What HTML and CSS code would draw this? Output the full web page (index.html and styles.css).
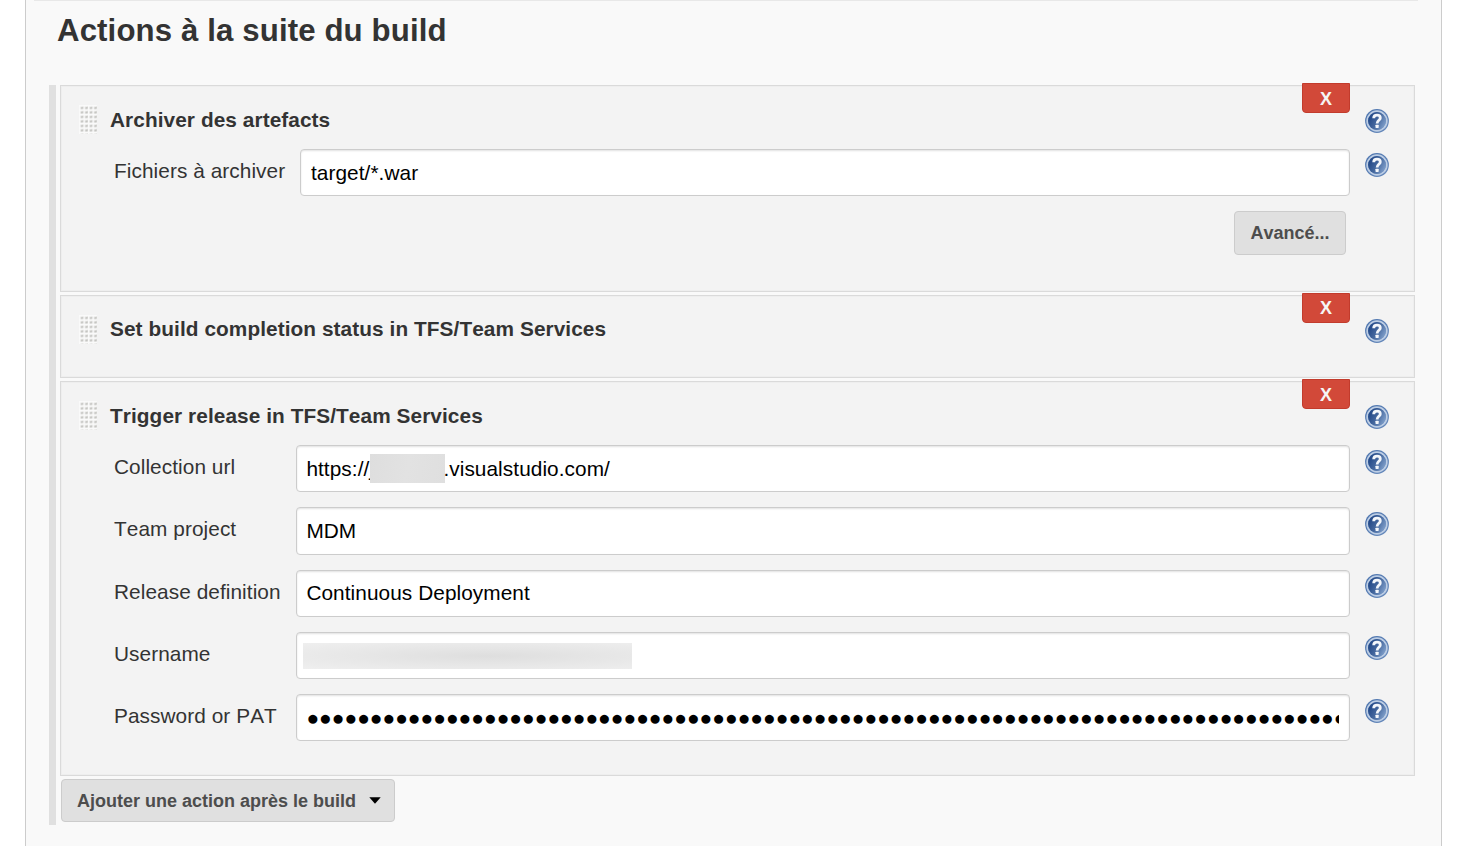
FILE: index.html
```html
<!DOCTYPE html>
<html lang="fr">
<head>
<meta charset="utf-8">
<title>Actions à la suite du build</title>
<link rel="stylesheet" href="styles.css">
</head>
<body>
<svg width="0" height="0" class="defs" aria-hidden="true">
  <defs>
    <linearGradient id="blue" x1="0" y1="0.3" x2="1" y2="0.8">
      <stop offset="0" stop-color="#1f4585"/><stop offset="0.5" stop-color="#46699f"/><stop offset="1" stop-color="#86a5cf"/>
    </linearGradient>
    <linearGradient id="rim" x1="0" y1="0" x2="1" y2="1">
      <stop offset="0" stop-color="#4a72ac"/><stop offset="1" stop-color="#6a8cbd"/>
    </linearGradient>
    <symbol id="help" viewBox="0 0 24 24">
      <circle cx="12" cy="12" r="11.9" fill="url(#rim)"/>
      <circle cx="12" cy="12" r="9.8" fill="none" stroke="#bccde4" stroke-width="1.8"/>
      <circle cx="12" cy="12" r="8.9" fill="url(#blue)"/>
      <path d="M8.7 9.2C8.7 7 10.2 6.2 12 6.2C14.2 6.2 15.3 7.3 15.3 8.9C15.3 11.2 12.1 11.4 12.1 14.4" fill="none" stroke="#f4f7fb" stroke-width="2.8"/>
      <rect x="10.5" y="15.7" width="3.2" height="3.2" rx="0.6" fill="#f4f7fb"/>
    </symbol>
    <pattern id="dots" width="4.5" height="4.5" patternUnits="userSpaceOnUse">
      <rect width="4.5" height="4.5" fill="#fafafa"/>
      <path d="M1.6 3.6L4 1.3V3.8H1.6Z" fill="#b4b4b0"/>
      <rect x="1.5" y="1.6" width="2.8" height="2.4" fill="#cacac7" opacity="0.7"/>
    </pattern>
    <symbol id="grip" viewBox="0 0 18 29"><rect width="18" height="29" fill="url(#dots)"/></symbol>
  </defs>
</svg>
<main class="panel">
  <div class="rule"></div>
  <h1 class="heading">Actions à la suite du build</h1>
  <section class="steps">
    <article class="step step-archive">
      <button class="delete">X</button>
      <header class="step-head"><svg class="grip"><use href="#grip"/></svg><h2 class="title">Archiver des artefacts</h2><svg class="help"><use href="#help"/></svg></header>
      <div class="fields">
        <div class="row row-wide"><label class="label">Fichiers à archiver</label><div class="input"><span>target/*.war</span></div><svg class="help"><use href="#help"/></svg></div>
      </div>
      <div class="advanced"><button class="button">Avancé...</button></div>
    </article>
    <article class="step step-status">
      <button class="delete">X</button>
      <header class="step-head"><svg class="grip"><use href="#grip"/></svg><h2 class="title">Set build completion status in TFS/Team Services</h2><svg class="help"><use href="#help"/></svg></header>
    </article>
    <article class="step step-release">
      <button class="delete">X</button>
      <header class="step-head"><svg class="grip"><use href="#grip"/></svg><h2 class="title">Trigger release in TFS/Team Services</h2><svg class="help"><use href="#help"/></svg></header>
      <div class="fields">
        <div class="row"><label class="label">Collection url</label><div class="input"><span>https://j</span><span class="mask-host"></span><span>.visualstudio.com/</span></div><svg class="help"><use href="#help"/></svg></div>
        <div class="row"><label class="label">Team project</label><div class="input"><span>MDM</span></div><svg class="help"><use href="#help"/></svg></div>
        <div class="row"><label class="label">Release definition</label><div class="input"><span>Continuous Deployment</span></div><svg class="help"><use href="#help"/></svg></div>
        <div class="row"><label class="label">Username</label><div class="input"><span class="mask-user"></span></div><svg class="help"><use href="#help"/></svg></div>
        <div class="row"><label class="label">Password or PAT</label><div class="input"><span class="secret">●●●●●●●●●●●●●●●●●●●●●●●●●●●●●●●●●●●●●●●●●●●●●●●●●●●●●●●●●●●●●●●●●●●●●●●●●●●●●●●●●●</span></div><svg class="help"><use href="#help"/></svg></div>
      </div>
    </article>
    <button class="button add">Ajouter une action après le build<svg class="caret" viewBox="0 0 12 7"><path d="M0.3 0.3H11.7L6 6.7Z"/></svg></button>
  </section>
</main>
</body>
</html>
```
FILE: styles.css
```css
* { box-sizing: border-box; }
body {
  margin: 0;
  height: 846px;
  overflow: hidden;
  background: #fff;
  color: #333;
  font: 20.8px/24px "Liberation Sans", Arial, sans-serif;
  font-kerning: none;
  letter-spacing: 0.07px;
}
.defs { position: absolute; }
.panel {
  width: 1417px;
  height: 846px;
  margin-left: 25px;
  padding: 0 23px;
  background: #f9f9f9;
  border: 1px solid #ccc;
  border-width: 0 1px;
}
.rule { height: 1px; margin: 0 0 0 -15px; background: #e8e8e8; }
.heading {
  margin: 12px 0 0 8px;
  height: 72px;
  font-size: 31.2px;
  line-height: 36px;
  letter-spacing: 0.12px;
  white-space: nowrap;
}
.steps {
  display: flex;
  flex-direction: column;
  align-items: flex-start;
  gap: 3px;
  width: 1366px;
  height: 740px;
  padding-left: 4px;
  border-left: 7px solid #e0e0e0;
}
.step {
  position: relative;
  flex: none;
  width: 1355px;
  background: #f3f3f3;
  border: 1px solid #dadada;
  box-shadow: inset 0 0 0 1px #eee;
}
.step-archive { height: 207px; }
.step-status { height: 83px; }
.step-release { height: 395px; }
.step-head {
  display: grid;
  grid-template-columns: 49px 1fr 49px;
  align-items: start;
  padding: 19px 0 0 18px;
  height: 63px;
}
.grip { width: 18px; height: 29px; }
.title { margin: 3px 0 0 -18px; font-size: 20.8px; line-height: 24px; letter-spacing: 0.08px; white-space: nowrap; }
.step-status .title { margin-top: 2px; }
.help { display: block; width: 24px; height: 24px; }
.step-head .help { margin-top: 4px; }
.delete {
  position: absolute;
  top: -3px;
  right: 64px;
  width: 48px;
  height: 30px;
  padding: 2px 0 0;
  background: #d24939;
  border: 1px solid #c23b2c;
  border-radius: 0 0 4px 4px;
  color: #f5f5f5;
  font: bold 18px/24px "Liberation Sans", Arial, sans-serif;
}
.step-status .delete { padding-top: 0; }
.fields { display: grid; gap: 15px; padding-left: 53px; }
.row { display: grid; grid-template-columns: 182px 1054px 24px; align-items: start; }
.row-wide { grid-template-columns: 186px 1050px 24px; }
.row .help { margin: 4.7px 0 0 15px; }
.row-wide .help { margin-top: 4px; }
.label { padding-top: 10px; white-space: nowrap; }
.input {
  display: flex;
  align-items: center;
  height: 47.25px;
  padding: 0.5px 10px 0 9.4px;
  overflow: hidden;
  background: #fff;
  border: 1px solid #ccc;
  border-radius: 4px;
  box-shadow: inset 0 1px 2px rgba(0, 0, 0, 0.12);
  color: #000;
  white-space: nowrap;
}
.row-wide .input { height: 47px; padding-left: 10px; }
.mask-host { width: 75px; height: 29px; margin: -1px -1.5px 0 -4.2px; background: linear-gradient(100deg, #dedede, #e2e2e2 50%, #dfdfdf); }
.mask-user { width: 329px; height: 26px; margin-left: -3.4px; background: radial-gradient(ellipse at 56% 50%, #dedede, #e6e6e6 45%, #efefef 100%); }
.secret { overflow: hidden; font-size: 21px; letter-spacing: 0; }
.advanced { display: flex; justify-content: flex-end; padding: 15px 68px 0 0; }
.button {
  height: 44px;
  padding: 0 15px;
  background: #e0e0e0;
  border: 1px solid #ccc;
  border-radius: 4px;
  color: #4d4d4d;
  font: bold 18px/24px "Liberation Sans", Arial, sans-serif;
  font-kerning: none;
  white-space: nowrap;
}
.advanced .button { width: 112px; }
.add { display: flex; align-items: center; width: 334px; height: 43px; margin-left: 1px; }
.caret { flex: none; width: 12px; height: 7px; margin-left: 12.6px; fill: #000; }
```
